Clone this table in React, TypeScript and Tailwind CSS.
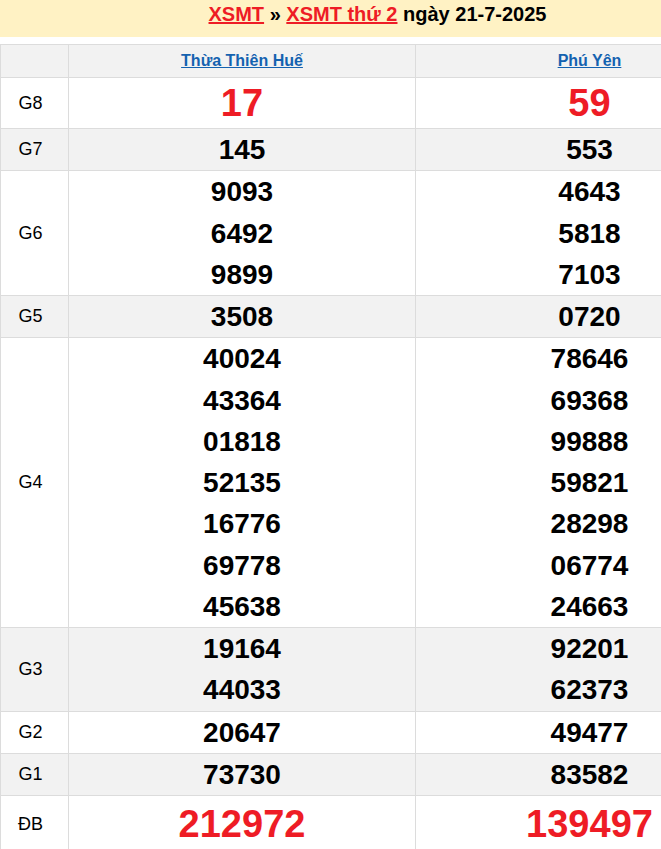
import React from "react";

type Row = {
  label: string;
  a: string[];
  b: string[];
  big?: boolean;
};

const rows: Row[] = [
  { label: "G8", a: ["17"], b: ["59"], big: true },
  { label: "G7", a: ["145"], b: ["553"] },
  { label: "G6", a: ["9093", "6492", "9899"], b: ["4643", "5818", "7103"] },
  { label: "G5", a: ["3508"], b: ["0720"] },
  {
    label: "G4",
    a: ["40024", "43364", "01818", "52135", "16776", "69778", "45638"],
    b: ["78646", "69368", "99888", "59821", "28298", "06774", "24663"],
  },
  { label: "G3", a: ["19164", "44033"], b: ["92201", "62373"] },
  { label: "G2", a: ["20647"], b: ["49477"] },
  { label: "G1", a: ["73730"], b: ["83582"] },
  { label: "ĐB", a: ["212972"], b: ["139497"], big: true },
];

function Numbers({ list, big, last }: { list: string[]; big?: boolean; last?: boolean }) {
  return (
    <td className="border border-[#dcdcdc] p-0 text-center">
      {list.map((n, i) => (
        <div
          key={i}
          className={
            big
              ? last
                ? "text-[38px] leading-[56px] font-bold text-[#ee1c25]"
                : "text-[38px] leading-[50px] font-bold text-[#ee1c25]"
              : "text-[28px] leading-[41.25px] font-bold text-black"
          }
        >
          {n}
        </div>
      ))}
    </td>
  );
}

export default function App() {
  return (
    <div className="w-[763px] bg-white font-['Liberation_Sans',Arial,sans-serif]">
      <div className="h-[37px] bg-[#fff2c4] pt-[1px] pr-[8px] text-center text-[20px] font-bold leading-[26px] text-black">
        <a href="#" className="text-[#ee1c25] underline">XSMT</a>
        {" » "}
        <a href="#" className="text-[#ee1c25] underline">XSMT thứ 2</a>
        {" ngày 21-7-2025"}
      </div>

      <table className="mt-[7px] w-[763px] table-fixed border-collapse">
        <colgroup>
          <col className="w-[68px]" />
          <col className="w-[347px]" />
          <col className="w-[348px]" />
        </colgroup>
        <thead>
          <tr className="h-[33px] bg-[#f2f2f2]">
            <th className="border border-[#dcdcdc]"></th>
            <th className="border border-[#dcdcdc] text-center text-[16px] font-bold">
              <a href="#" className="text-[#1462b0] underline">Thừa Thiên Huế</a>
            </th>
            <th className="border border-[#dcdcdc] text-center text-[16px] font-bold">
              <a href="#" className="text-[#1462b0] underline">Phú Yên</a>
            </th>
          </tr>
        </thead>
        <tbody>
          {rows.map((r, i) => (
            <tr key={r.label} className={i % 2 === 1 ? "bg-[#f2f2f2]" : "bg-white"}>
              <td className="border border-[#dcdcdc] pr-[8px] text-center text-[18px] text-black">
                {r.label}
              </td>
              <Numbers list={r.a} big={r.big} last={i === rows.length - 1} />
              <Numbers list={r.b} big={r.big} last={i === rows.length - 1} />
            </tr>
          ))}
        </tbody>
      </table>
    </div>
  );
}
